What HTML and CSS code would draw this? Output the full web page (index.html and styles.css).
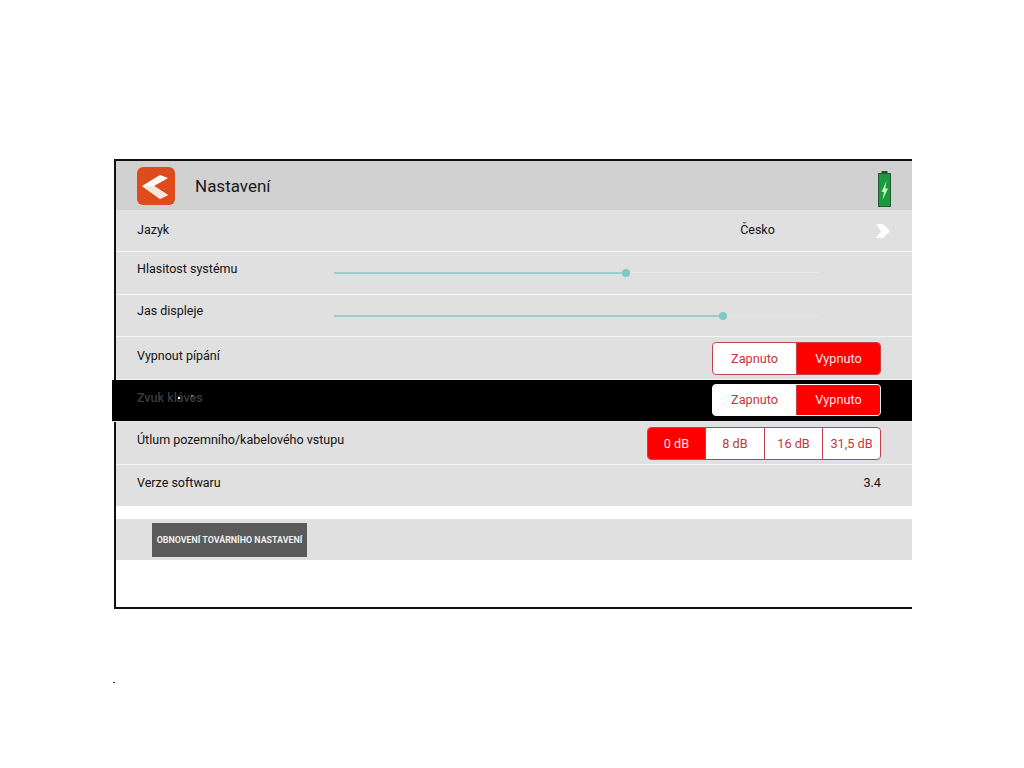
FILE: index.html
```html
<!DOCTYPE html>
<html lang="cs">
<head>
  <meta charset="UTF-8">
  <title>Nastavení</title>
  <link rel="stylesheet" href="styles.css">
</head>
<body>
  <div class="screen">
    <div class="header">
      <div class="back-btn">
        <svg width="38" height="38" viewBox="0 0 38 38">
          <path d="M5 19 L23 8 L31 11 L17 19 L31 28 L23 32 Z" fill="#fff"/>
          <path d="M17 19 L31 28 L23 32 L5 19 Z" fill="#fbe6da"/>
        </svg>
      </div>
      <h1 class="title">Nastavení</h1>
      <svg class="battery" width="13" height="36" viewBox="0 0 13 36">
        <rect x="3.5" y="0" width="6" height="3" fill="#23502f"/>
        <rect x="0.5" y="2.5" width="12" height="33" fill="#1a9a3c" stroke="#255c35"/>
        <path d="M8.5 10 L3.5 21 L6 21 L4.5 29 L10 17.5 L7.3 17.5 Z" fill="#c4f7c4"/>
      </svg>
    </div>

    <div class="row row-lang">
      <span class="label">Jazyk</span>
      <span class="lang-value">Česko</span>
      <svg class="arrow" width="16" height="16" viewBox="0 0 16 16">
        <path d="M1 1 L8 1 L15 8 L8 15 L1 15 L6 8 Z" fill="#fff"/>
      </svg>
    </div>

    <div class="row">
      <span class="label label-wide">Hlasitost systému</span>
      <div class="slider">
        <div class="slider-fill" style="width: 60%"><div class="slider-knob"></div></div>
      </div>
    </div>

    <div class="row">
      <span class="label label-wide">Jas displeje</span>
      <div class="slider">
        <div class="slider-fill" style="width: 80%"><div class="slider-knob"></div></div>
      </div>
    </div>

    <div class="row">
      <span class="label label-first">Vypnout pípání</span>
      <div class="segments">
        <span class="seg seg-83">Zapnuto</span>
        <span class="seg seg-84 seg-on">Vypnuto</span>
      </div>
    </div>

    <div class="row row-black">
      <span class="label label-dim">Zvuk kláves<i class="speck speck-a"></i><i class="speck speck-b"></i></span>
      <div class="segments">
        <span class="seg seg-83">Zapnuto</span>
        <span class="seg seg-84 seg-on">Vypnuto</span>
      </div>
    </div>

    <div class="row">
      <span class="label">Útlum pozemního/kabelového vstupu</span>
      <div class="segments">
        <span class="seg seg-57 seg-on">0 dB</span>
        <span class="seg seg-59">8 dB</span>
        <span class="seg seg-58">16 dB</span>
        <span class="seg seg-58">31,5 dB</span>
      </div>
    </div>

    <div class="row row-last">
      <span class="label">Verze softwaru</span>
      <span class="version">3.4</span>
    </div>

    <div class="row-reset">
      <button class="reset-btn">OBNOVENÍ TOVÁRNÍHO NASTAVENÍ</button>
    </div>
  </div>
  <div class="tick"></div>
</body>
</html>
```

FILE: styles.css
```css
body {
  margin: 0;
  background: #fff;
  font-family: Roboto, "Liberation Sans", sans-serif;
  color: #111;
}

.screen {
  width: 796px;
  height: 446px;
  margin: 159px 0 0 114px;
  border-top: 2px solid #111;
  border-bottom: 2px solid #111;
  border-left: 2px solid #111;
}

.header {
  display: flex;
  align-items: center;
  height: 49px;
  padding: 0 21px;
  background: #d1d1d1;
}

.back-btn {
  box-sizing: border-box;
  width: 38px;
  height: 38px;
  border-radius: 6px;
  background: #de4c1c;
}

.back-btn svg {
  display: block;
}

.title {
  margin: 0 0 0 20px;
  font-size: 17px;
  font-weight: 400;
  color: #1a1a1a;
}

.battery {
  align-self: flex-start;
  margin: 10px 0 0 auto;
}

.row {
  display: flex;
  box-sizing: border-box;
  align-items: flex-start;
  height: 42.6px;
  padding: 0 31px 0 21px;
  background: #e0e0e0;
  border-bottom: 1.6px solid #f4f4f4;
}

.label {
  position: relative;
  padding-top: 10px;
  font-size: 12.5px;
  line-height: 15px;
}

.label-first {
  padding-top: 11px;
}

.label-wide {
  flex: none;
  width: 197px;
  padding-top: 8.5px;
}

.row-lang {
  height: 42px;
}

.row-lang .label {
  padding-top: 12px;
}

.lang-value {
  margin-left: 571px;
  padding-top: 12px;
  font-size: 12.5px;
  line-height: 15px;
}

.arrow {
  margin: 13px -10px 0 auto;
}

.slider {
  width: 486px;
  height: 1px;
  margin-top: 20px;
  background: #e7e7e7;
}

.slider-fill {
  position: relative;
  height: 2px;
  background: #94cfca;
}

.slider-knob {
  position: absolute;
  top: -3px;
  right: -4px;
  width: 8px;
  height: 8px;
  border-radius: 50%;
  background: #7fc8c2;
}

.segments {
  display: flex;
  box-sizing: border-box;
  height: 33px;
  margin-top: 5px;
  margin-left: auto;
  border: 1px solid #c2434c;
  border-radius: 4px;
  overflow: hidden;
  background: #fff;
  font-size: 12.7px;
  color: #c6343c;
}

.seg {
  display: flex;
  align-items: center;
  justify-content: center;
  box-sizing: border-box;
  padding-bottom: 1px;
}

.seg + .seg {
  border-left: 1px solid #c2434c;
}

.seg-on {
  background: #fe0000;
  color: #fbe4e4;
}

.seg-57 { width: 57px; }
.seg-58 { width: 58px; }
.seg-59 { width: 59px; }
.seg-83 { width: 83px; }
.seg-84 { width: 84px; }

.row-black {
  margin-left: -4px;
  padding-left: 25px;
  background: #000;
  border-bottom-color: #e8e8e8;
}

.row-black .segments {
  height: 32px;
  margin-top: 4px;
  border-color: #fff;
}

.label-dim {
  color: #3c3c3c;
  font-weight: 500;
}

.speck {
  position: absolute;
  width: 2px;
  height: 2px;
  background: #fff;
}

.speck-a {
  left: 41px;
  top: 17px;
}

.speck-b {
  left: 54px;
  top: 15px;
  background: #777;
}

.version {
  margin-left: auto;
  padding-top: 10px;
  font-size: 12.7px;
  line-height: 15px;
}

.row-last {
  height: 41px;
  border-bottom: 0;
}

.row-reset {
  box-sizing: border-box;
  height: 41px;
  margin-top: 13px;
  padding: 4px 0 0 36px;
  background: #e0e0e0;
}

.reset-btn {
  display: block;
  width: 155px;
  height: 34px;
  padding: 0;
  border: 0;
  background: #5a5a5a;
  color: #f0f0f0;
  font-family: Roboto, sans-serif;
  font-size: 8.9px;
  font-weight: 700;
}

.tick {
  width: 2px;
  height: 1px;
  margin: 73px 0 0 113px;
  background: #333;
}
```
